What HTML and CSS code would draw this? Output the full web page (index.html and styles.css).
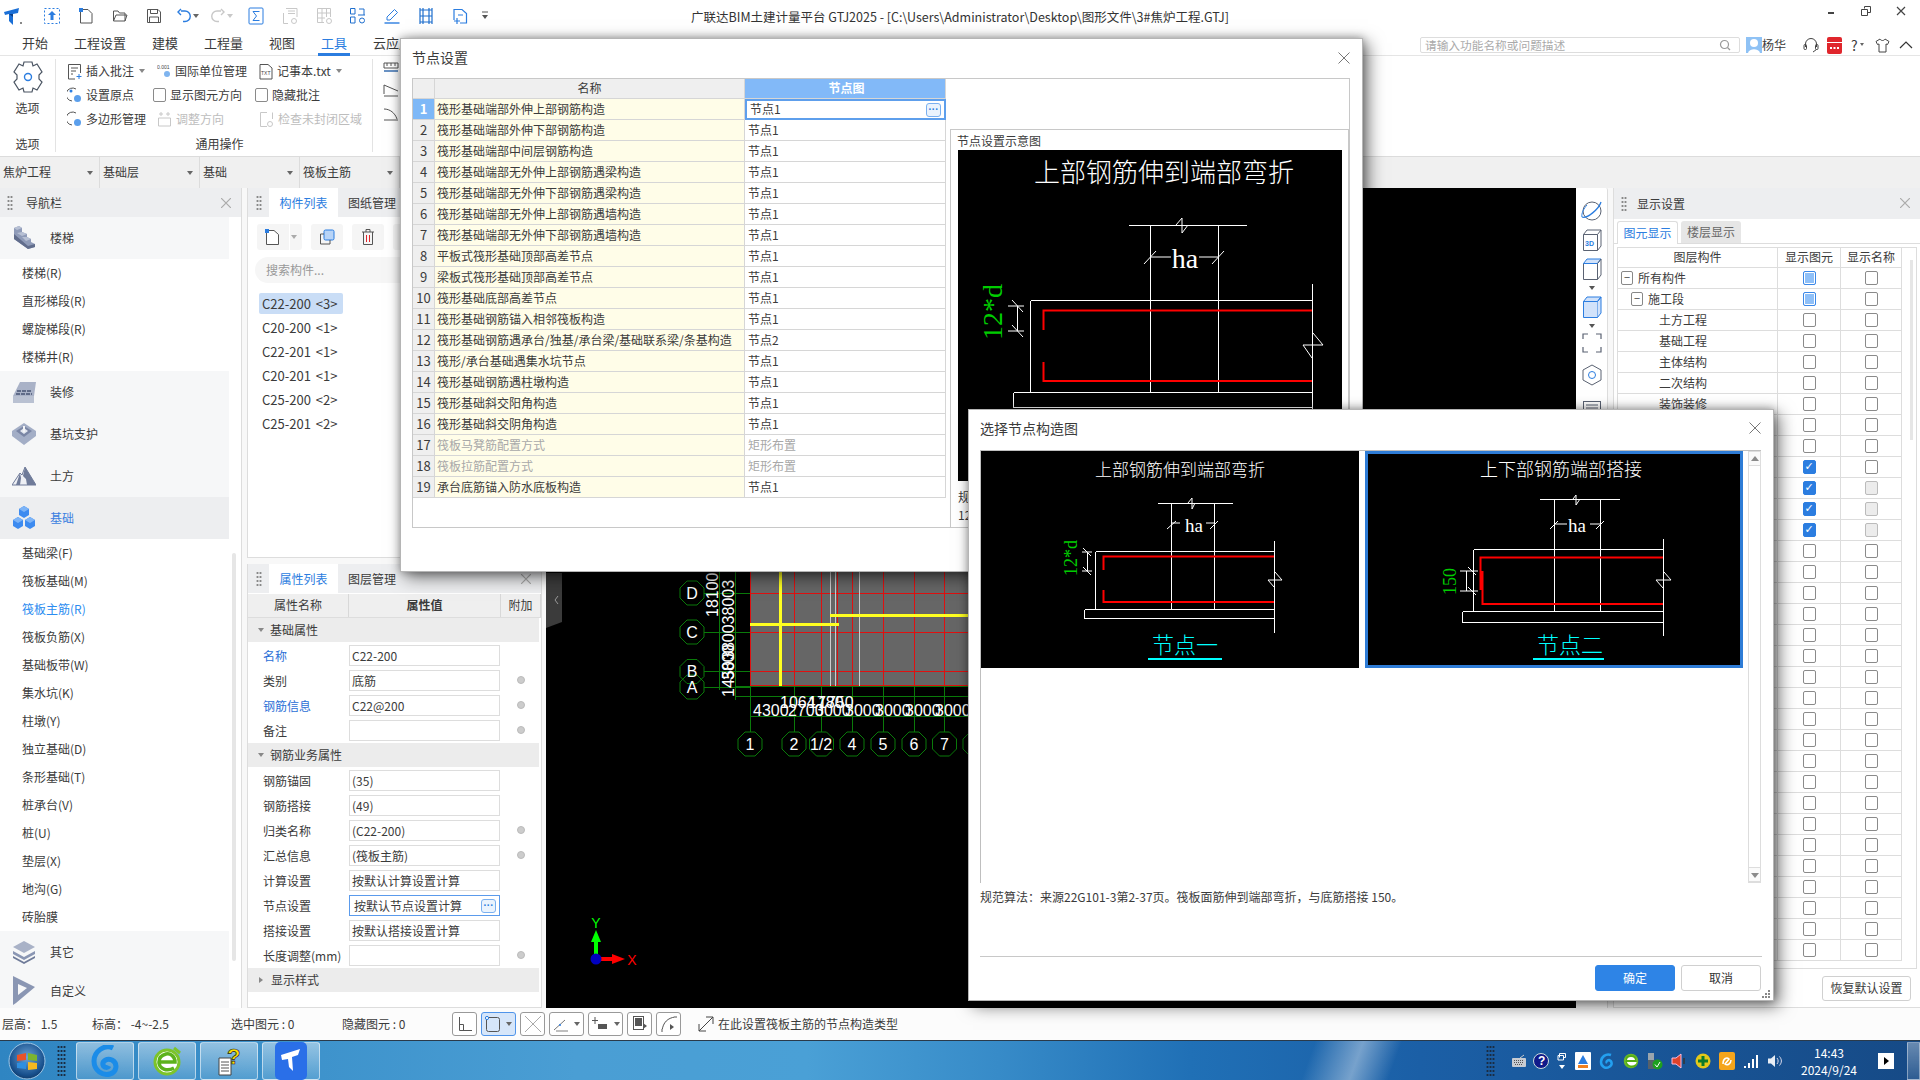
FILE: index.html
```html
<!DOCTYPE html>
<html lang="zh-CN">
<head>
<meta charset="utf-8">
<title>广联达BIM土建计量平台 GTJ2025</title>
<link rel="stylesheet" href="styles.css">
</head>
<body>
<div class="app">
  <header class="titlebar">
    <div class="qa">
      <span class="qa-logo"><svg width="20" height="20" viewBox="0 0 20 20"><path d="M1 6 16 2 15 7 10 8 10 19 6 15 6 8 2 9Z" fill="#1a6fd6"/><path d="M6 8 10 8 10 11Z" fill="#0c3f86"/><rect x="17" y="16" width="2" height="2" fill="#888"/></svg></span>
      <span class="qa-cell"><svg width="18" height="18" viewBox="0 0 18 18"><rect x="1.500" y="1.500" width="15" height="15" fill="none" stroke="#2b7de0" stroke-dasharray="2 2"/><path d="M9 4 13 8H10.500V13H7.500V8H5Z" fill="#2b7de0"/></svg></span>
      <span class="qa-cell"><svg width="16" height="18" viewBox="0 0 16 18"><path d="M2.500 2.500H10L14 6.500V16H2.500Z" fill="#fff" stroke="#555"/><rect x="1" y="1" width="4" height="4" fill="#2b7de0"/></svg></span>
      <span class="qa-cell"><svg width="16" height="16" viewBox="0 0 16 16"><path d="M1.500 13V3H6L7.500 5H13V13Z" fill="none" stroke="#555"/><path d="M1.500 13 4 7H15L13 13" fill="none" stroke="#555"/></svg></span>
      <span class="qa-cell"><svg width="16" height="16" viewBox="0 0 16 16"><path d="M1.500 1.500H12L14.500 4V14.500H1.500Z" fill="none" stroke="#555"/><path d="M4.500 1.500V5.500H11.500V1.500M3.500 14.500V9H12.500V14.500" fill="none" stroke="#555"/></svg></span>
      <span class="qa-cell"><svg width="14" height="16" viewBox="0 0 14 16"><path d="M4 3H8A5 5 0 0 1 8 13.500H6M4 1 1 4 4 7" fill="none" stroke="#2b7de0" stroke-width="1.400"/></svg><i class="caret"></i></span>
      <span class="qa-cell"><svg width="14" height="16" viewBox="0 0 14 16"><path d="M10 3H6A5 5 0 0 0 6 13.500H8M10 1 13 4 10 7" fill="none" stroke="#c8c8c8" stroke-width="1.400"/></svg><i class="caret off"></i></span>
      <span class="qa-cell"><svg width="16" height="18" viewBox="0 0 16 18"><rect x="1" y="1" width="14" height="16" rx="1" fill="none" stroke="#2b7de0"/><path d="M11.500 4.500H5L8.500 9 5 13.500H11.500" fill="none" stroke="#2b7de0"/></svg></span>
      <span class="qa-cell"><svg width="18" height="18" viewBox="0 0 18 18"><path d="M5 1.500H16V10M2.500 6V16.500H7" fill="none" stroke="#c8c8c8"/><path d="M7 4H14M7 6.500H14" stroke="#c8c8c8"/><circle cx="13" cy="14" r="2.500" fill="none" stroke="#c8c8c8"/></svg></span>
      <span class="qa-cell"><svg width="18" height="18" viewBox="0 0 18 18"><path d="M2.500 1.500H15.500V10M2.500 1.500V15.500H9M2.500 6H15.500M2.500 11H10M7 1.500V15.500M11.500 1.500V10" fill="none" stroke="#c8c8c8"/><circle cx="14" cy="14" r="2.500" fill="none" stroke="#c8c8c8"/></svg></span>
      <span class="qa-cell"><svg width="18" height="18" viewBox="0 0 18 18"><path d="M1.500 1.500H6V7H1.500ZM1.500 10H6V16H1.500ZM10 2H15V8" fill="none" stroke="#1f6fce"/><circle cx="13" cy="13.500" r="2.500" fill="none" stroke="#1f6fce"/><path d="M9 8H16" stroke="#1f6fce"/></svg></span>
      <span class="qa-cell"><svg width="18" height="18" viewBox="0 0 18 18"><path d="M4 10 11.500 2.500 14.500 5.500 7 13H4Z" fill="none" stroke="#2b7de0"/><path d="M1.500 16H16.500" stroke="#2b7de0" stroke-width="1.400"/></svg></span>
      <span class="qa-cell"><svg width="16" height="18" viewBox="0 0 16 18"><path d="M2 1V17M14 1V17M5 1V17M11 1V17M2 3H14M2 9H14M2 15H14" fill="none" stroke="#1f6fce" stroke-width="1.200"/></svg></span>
      <span class="qa-cell"><svg width="16" height="18" viewBox="0 0 16 18"><path d="M2 13V2.500H10L14.500 6.500V16H8" fill="none" stroke="#2b7de0" stroke-width="1.200"/><path d="M5 11V17M2 14H8M6 8H11" stroke="#2b7de0" stroke-width="1.200"/></svg></span>
      <span class="qa-last"><svg width="8" height="10" viewBox="0 0 8 10"><path d="M1 1H7" stroke="#555"/><path d="M1 4H7L4 8Z" fill="#555"/></svg></span>
    </div>
    <div class="title-text">广联达BIM土建计量平台 GTJ2025 - [C:\Users\Administrator\Desktop\图形文件\3#焦炉工程.GTJ]</div>
    <div class="win-ctrl">
      <svg class="wc-min" width="8" height="3" viewBox="0 0 8 3"><rect width="6" height="2" fill="#444"/></svg>
      <svg width="10" height="10" viewBox="0 0 10 10"><path d="M3.500 2.500V.5H9.500V6.500H7M.5 3.500H6.500V9.500H.5Z" fill="none" stroke="#444"/></svg>
      <svg width="10" height="10" viewBox="0 0 10 10"><path d="M1 1 9 9M9 1 1 9" stroke="#444" stroke-width="1.200"/></svg>
    </div>
  </header>

  <nav class="menubar">
    <span class="m-first">开始</span><span>工程设置</span><span>建模</span><span>工程量</span><span>视图</span><span class="m-on"><b>工具</b></span><span>云应用</span>
    <div class="menu-right">
      <div class="help-search"><span>请输入功能名称或问题描述</span><svg width="12" height="12" viewBox="0 0 12 12"><circle cx="5.500" cy="5.500" r="4" fill="none" stroke="#999" stroke-width="1.200"/><path d="M8.500 8.500 11 11" stroke="#999" stroke-width="1.200"/></svg></div>
      <svg class="avatar" width="16" height="16" viewBox="0 0 16 16"><rect width="16" height="16" fill="#8fc2f5"/><circle cx="8" cy="6" r="4" fill="#fff"/><path d="M2 16C3 11 13 11 14 16Z" fill="#fff"/></svg>
      <span class="uname">杨华</span>
      <svg class="mr-ic" width="16" height="16" viewBox="0 0 16 16"><path d="M2.500 10V7A5.500 5.500 0 0 1 13.500 7V10" fill="none" stroke="#444"/><rect x="1" y="7.500" width="2.500" height="5" rx="1" fill="none" stroke="#444"/><rect x="12.500" y="7.500" width="2.500" height="5" rx="1" fill="none" stroke="#444"/><path d="M13.500 12.500 10 15" fill="none" stroke="#444"/></svg>
      <svg class="mr-ic2" width="15" height="17" viewBox="0 0 15 17"><rect width="15" height="17" rx="2" fill="#e0262c"/><rect x="0" y="5" width="15" height="1" fill="#fff"/><rect x="3" y="10" width="2" height="2" fill="#fff"/><rect x="6.500" y="10" width="2" height="2" fill="#fff"/><rect x="10" y="10" width="2" height="2" fill="#fff"/></svg>
      <span class="qm">?<i class="caret tiny"></i></span>
      <svg class="mr-ic3" width="15" height="15" viewBox="0 0 15 15"><path d="M5 1 1 3.500 2.500 6.500 4 6V14H11V6L12.500 6.500 14 3.500 10 1C9 3 6 3 5 1Z" fill="none" stroke="#444"/></svg>
      <svg class="mr-ic4" width="14" height="8" viewBox="0 0 14 8"><path d="M1 7 7 1 13 7" fill="none" stroke="#333" stroke-width="1.200"/></svg>
    </div>
  </nav>

  <section class="ribbon">
    <div class="rg rg-opt">
      <div class="opt-main">
        <svg width="30" height="34" viewBox="0 0 30 34"><path d="M11 2H19L20 6 24 4 29 12 26 15V19L29 22 24 30 20 28 19 32H11L10 28 6 30 1 22 4 19V15L1 12 6 4 10 6Z" fill="none" stroke="#4b5563" stroke-width="1.200"/><circle cx="15" cy="17" r="3.500" fill="none" stroke="#2b7de0" stroke-width="1.400"/></svg>
        <span>选项</span>
      </div>
      <div class="rg-label">选项</div>
    </div>
    <div class="rg rg-gen">
      <div class="rg-grid">
        <div class="ri"><svg width="15" height="17" viewBox="0 0 15 17"><path d="M8 16H1.500V1.500H13.500V10M4 5H11M4 8H9M4 11H6" fill="none" stroke="#555"/><path d="M12 11V16M9.500 13.500H14.500" stroke="#2b7de0"/></svg><span class="it">插入批注</span><i class="caret"></i></div>
        <div class="ri"><svg width="14" height="17" viewBox="0 0 14 17"><text x="0" y="6" class="tiny-t">0.001</text><circle cx="10" cy="11" r="3" fill="#7fb4ef"/></svg><span>国际单位管理</span></div>
        <div class="ri"><svg width="14" height="17" viewBox="0 0 14 17"><path d="M1 1.500H9L13 5V16H1Z" fill="none" stroke="#555"/><text x="2" y="12" class="tiny-t">TXT</text></svg><span>记事本.txt</span><i class="caret"></i></div>
        <div class="ri"><svg width="15" height="17" viewBox="0 0 15 17"><path d="M9 2A6.500 6.500 0 1 0 5 14" fill="none" stroke="#555"/><circle cx="4" cy="4" r="1.500" fill="#2b7de0"/><circle cx="10.500" cy="11.500" r="3.500" fill="#5b9fec"/></svg><span>设置原点</span></div>
        <label class="ri"><i class="rb-check"></i><span>显示图元方向</span></label>
        <label class="ri"><i class="rb-check"></i><span>隐藏批注</span></label>
        <div class="ri"><svg width="15" height="17" viewBox="0 0 15 17"><path d="M9 2A6.500 6.500 0 1 0 5 14" fill="none" stroke="#555"/><circle cx="10.500" cy="11.500" r="3.500" fill="#5b9fec"/></svg><span>多边形管理</span></div>
        <div class="ri off"><svg width="15" height="17" viewBox="0 0 15 17"><path d="M1.500 7H13.500V15H1.500ZM4 1V5M11 1V5M2 3H6M9 3H13" fill="none" stroke="#c8c8c8"/></svg><span>调整方向</span></div>
        <div class="ri off"><svg width="15" height="17" viewBox="0 0 15 17"><path d="M8 15.500H1.500V1.500H8M13.500 1.500V8" fill="none" stroke="#c8c8c8"/><circle cx="11" cy="13" r="2.500" fill="none" stroke="#c8c8c8"/></svg><span>检查未封闭区域</span></div>
      </div>
      <div class="rg-label">通用操作</div>
    </div>
    <div class="rg rg-third">
      <svg width="16" height="15" viewBox="0 0 16 15"><path d="M1 3H15V8H1ZM1 11H15M4 3V6M8 3V6M12 3V6" fill="none" stroke="#555"/><path d="M1 11H15" stroke="#2b7de0"/></svg>
      <svg width="16" height="15" viewBox="0 0 16 15"><path d="M1 10V1L15 7M1 12H15" fill="none" stroke="#555"/></svg>
      <svg width="16" height="15" viewBox="0 0 16 15"><path d="M1 1C7 1 12 5 14 11M1 12H15" fill="none" stroke="#555"/></svg>
    </div>
  </section>

  <div class="selbar">
    <div class="sel">焦炉工程<i class="caret"></i></div>
    <div class="sel">基础层<i class="caret"></i></div>
    <div class="sel">基础<i class="caret"></i></div>
    <div class="sel">筏板主筋<i class="caret"></i></div>
  </div>

  <main class="work">
    <aside class="nav">
      <div class="ph"><i class="grip"></i><span class="ph-t">导航栏</span><svg class="ph-x" width="10" height="10" viewBox="0 0 10 10"><path d="M0 0 10 10M10 0 0 10" stroke="#aaa" stroke-width="1.200"/></svg></div>
      <div class="sec"><svg width="24" height="24" viewBox="0 0 24 24"><path d="M2 2 7 0 10 2V6L15 8V11L19 13V16L23 18V21L16 23 2 13Z" fill="#8f9bb8"/><path d="M2 2 7 0 10 2 5 4ZM5 7 10 6 15 8 10 10ZM10 11 15 11 19 13 14 15Z" fill="#b7c0d4"/><path d="M2 13 16 23 23 21V18L16 20 2 8Z" fill="#616d8c"/></svg><span>楼梯</span></div>
      <div class="sub">楼梯(R)</div><div class="sub">直形梯段(R)</div><div class="sub">螺旋梯段(R)</div><div class="sub">楼梯井(R)</div>
      <div class="sec"><svg width="24" height="24" viewBox="0 0 24 24"><path d="M8 2H24L22 16H1Z" fill="#a9b2c7"/><path d="M1 16H22V23H1Z" fill="#b9c1d2"/><path d="M5 11H20M4 14H20" stroke="#5f6b88" stroke-width="2" stroke-dasharray="4 1"/></svg><span>装修</span></div>
      <div class="sec"><svg width="24" height="24" viewBox="0 0 24 24"><path d="M12 1 24 9V14L12 23 0 14V9Z" fill="#a3aec6"/><path d="M12 4 20 9 12 15 4 9Z" fill="#7a86a5"/><path d="M12 6 16 9 12 12 8 9Z" fill="#e4e8f0"/><path d="M11 4H13V10H11Z" fill="#f4f5f8"/></svg><span>基坑支护</span></div>
      <div class="sec"><svg width="24" height="24" viewBox="0 0 24 24"><path d="M0 21 8 9 10 11 13 3 24 21Z" fill="#eef0f5" stroke="#6f7b99"/><path d="M13 3 24 21H15L14 15 11 12Z" fill="#6f7b99"/><path d="M8 9 4 21H8L9 14Z" fill="#6f7b99"/></svg><span>土方</span></div>
      <div class="sec sec-on"><svg width="24" height="24" viewBox="0 0 24 24"><path d="M12 0 17 3V9L12 12 7 9V3Z" fill="#3d8bf0"/><path d="M6 11 11 14V20L6 23 1 20V14Z" fill="#3d8bf0"/><path d="M18 11 23 14V20L18 23 13 20V14Z" fill="#3d8bf0"/><path d="M7 3 12 6 17 3 12 0ZM1 14 6 17 11 14 6 11ZM13 14 18 17 23 14 18 11Z" fill="#7db4f7"/></svg><span>基础</span></div>
      <div class="sub">基础梁(F)</div><div class="sub">筏板基础(M)</div><div class="sub sub-on">筏板主筋(R)</div><div class="sub">筏板负筋(X)</div><div class="sub">基础板带(W)</div><div class="sub">集水坑(K)</div><div class="sub">柱墩(Y)</div><div class="sub">独立基础(D)</div><div class="sub">条形基础(T)</div><div class="sub">桩承台(V)</div><div class="sub">桩(U)</div><div class="sub">垫层(X)</div><div class="sub">地沟(G)</div><div class="sub">砖胎膜</div>
      <div class="sec"><svg width="24" height="24" viewBox="0 0 24 24"><path d="M12 1 23 7 12 13 1 7Z" fill="#a9b2c7"/><path d="M1 11 12 17 23 11V14L12 20 1 14Z" fill="#8a96b3"/><path d="M1 16 12 22 23 16V18L12 24 1 18Z" fill="#6f7b99"/></svg><span>其它</span></div>
      <div class="sec sec-last"><svg width="24" height="30" viewBox="0 0 24 30"><path d="M1 1 23 12 4 28 1 30Z" fill="#8a96b3"/><path d="M6 9 15 13 6 20Z" fill="#f6f7f8"/></svg><span>自定义</span></div>
      <i class="nav-scroll"></i>
    </aside>

    <div class="mid">
      <section class="list-panel">
        <div class="ph ph-tabs"><i class="grip g2"></i><span class="tab-on">构件列表</span><span class="tab-off">图纸管理</span></div>
        <div class="lp-tools">
          <span class="lbtn lb-new"><svg width="16" height="18" viewBox="0 0 16 18"><path d="M2.500 2.500H10L14.500 6.500V16.500H2.500Z" fill="#fff" stroke="#555"/><rect x="1" y="1" width="4" height="4" fill="#2b7de0"/></svg><i class="caret lb-caret"></i></span>
          <span class="lbtn"><svg width="16" height="16" viewBox="0 0 16 16"><rect x="5" y="1" width="10" height="10" rx="1.500" fill="#b8d4f7" stroke="#2b7de0"/><path d="M5 5H1.500V15H11V11" fill="none" stroke="#555"/></svg></span>
          <span class="lbtn"><svg width="14" height="18" viewBox="0 0 14 18"><path d="M1 4H13M5 4V1.500H9V4M2.500 4V16.500H11.500V4" fill="none" stroke="#555"/><path d="M5.500 7V14M8.500 7V14" stroke="#e0262c"/></svg></span>
          <span class="lbtn"></span>
        </div>
        <div class="lp-search">搜索构件...</div>
        <ul class="lp-list">
          <li class="lp-on">C22-200 &lt;3&gt;</li><li>C20-200 &lt;1&gt;</li><li>C22-201 &lt;1&gt;</li><li>C20-201 &lt;1&gt;</li><li>C25-200 &lt;2&gt;</li><li>C25-201 &lt;2&gt;</li>
        </ul>
      </section>
      <section class="prop-panel">
        <div class="ph ph-tabs"><i class="grip g2"></i><span class="tab-on">属性列表</span><span class="tab-off">图层管理</span><svg class="ph-x" width="10" height="10" viewBox="0 0 10 10"><path d="M0 0 10 10M10 0 0 10" stroke="#aaa" stroke-width="1.200"/></svg></div>
        <div class="pt-head"><span>属性名称</span><b>属性值</b><span>附加</span></div>
        <div class="pt-sec"><i class="tri-d"></i>基础属性</div>
        <div class="pr"><span class="lk">名称</span><span class="pv">C22-200</span><i></i></div>
        <div class="pr"><span>类别</span><span class="pv">底筋</span><i class="dot"></i></div>
        <div class="pr"><span class="lk">钢筋信息</span><span class="pv">C22@200</span><i class="dot"></i></div>
        <div class="pr"><span>备注</span><span class="pv"></span><i class="dot"></i></div>
        <div class="pt-sec pt-gap"><i class="tri-d"></i>钢筋业务属性</div>
        <div class="pr"><span>钢筋锚固</span><span class="pv">(35)</span><i></i></div>
        <div class="pr"><span>钢筋搭接</span><span class="pv">(49)</span><i></i></div>
        <div class="pr"><span>归类名称</span><span class="pv">(C22-200)</span><i class="dot"></i></div>
        <div class="pr"><span>汇总信息</span><span class="pv">(筏板主筋)</span><i class="dot"></i></div>
        <div class="pr"><span>计算设置</span><span class="pv">按默认计算设置计算</span><i></i></div>
        <div class="pr"><span>节点设置</span><span class="pv pv-on">按默认节点设置计算<em class="more">···</em></span><i></i></div>
        <div class="pr"><span>搭接设置</span><span class="pv">按默认搭接设置计算</span><i></i></div>
        <div class="pr"><span>长度调整(mm)</span><span class="pv"></span><i class="dot"></i></div>
        <div class="pt-sec pt-gap"><i class="tri-r"></i>显示样式</div>
      </section>
    </div>

    <div class="canvas">
      <svg class="cad" width="1030" height="820" viewBox="546 188 1030 820">
        <path d="M546 573H562V622L546 628Z" fill="#3b3b3b"/><path d="M558 596 555 600 558 604" fill="none" stroke="#999"/>
        <rect x="750" y="560" width="240" height="126" fill="#666"/>
        <g stroke="#e01010" shape-rendering="crispEdges">
          <path d="M750 560V686M794 560V686M821.500 560V686M837.500 560V686M852 560V686M883 560V686M914 560V686M944.500 560V686M750 593.500H990M750 632.500H990M750 671.500H990"/>
          <path d="M750 686H990" stroke-width="2"/>
        </g>
        <path d="M830.500 560V686M835.500 560V686M859.500 560V686" stroke="#ccc" shape-rendering="crispEdges"/>
        <g fill="#ffff20" shape-rendering="crispEdges"><rect x="779" y="560" width="3" height="126"/><rect x="750" y="622.500" width="89" height="3"/><rect x="830" y="613.500" width="140" height="3"/></g>
        <g stroke="#0a7a0a" fill="none" shape-rendering="crispEdges">
          <path d="M704 593.500H750M704 632.500H750M704 671.500H750M704 687.500H750M719.500 570V690M735.500 570V700"/>
          <path d="M750 686V732M794 686V732M821.500 686V732M852 686V732M883 686V732M914 686V732M944.500 686V732M735 686H990M735 696.500H990M750 716.500H990"/>
        </g>
        <g fill="none" stroke="#0a7a0a">
          <path d="M687 581H697L704 588V598L697 605H687L680 598V588Z"/>
          <path d="M687 620H697L704 627V637L697 644H687L680 637V627Z"/>
          <path d="M687 659.500H697L704 666.500V676.500L697 683.500H687L680 676.500V666.500Z"/>
          <path d="M687 675H697L704 682V692L697 699H687L680 692V682Z"/>
          <path d="M745 732H755L762 739V749L755 756H745L738 749V739Z"/>
          <path d="M789 732H799L806 739V749L799 756H789L782 749V739Z"/>
          <path d="M816.500 732H826.500L833.500 739V749L826.500 756H816.500L809.500 749V739Z"/>
          <path d="M847 732H857L864 739V749L857 756H847L840 749V739Z"/>
          <path d="M878 732H888L895 739V749L888 756H878L871 749V739Z"/>
          <path d="M909 732H919L926 739V749L919 756H909L902 749V739Z"/>
          <path d="M939.500 732H949.500L956.500 739V749L949.500 756H939.500L932.500 749V739Z"/>
          <path d="M970 732H980L987 739V749L980 756H970L963 749V739Z"/>
        </g>
        <g class="cad-t">
          <text x="692" y="599" text-anchor="middle">D</text><text x="692" y="638" text-anchor="middle">C</text><text x="692" y="677" text-anchor="middle">B</text><text x="692" y="693" text-anchor="middle">A</text>
          <text x="750" y="750" text-anchor="middle">1</text><text x="794" y="750" text-anchor="middle">2</text><text x="821" y="750" text-anchor="middle">1/2</text><text x="852" y="750" text-anchor="middle">4</text><text x="883" y="750" text-anchor="middle">5</text><text x="914" y="750" text-anchor="middle">6</text><text x="944.500" y="750" text-anchor="middle">7</text>
          <text transform="translate(718 617) rotate(-90)">18100</text>
          <text transform="translate(734 660) rotate(-90)">380038003</text>
          <text transform="translate(734 697) rotate(-90)">1450</text>
          <text transform="translate(734 680) rotate(-90)">3800</text>
          <text x="780" y="708">1064</text><text x="808" y="708">1780</text><text x="818" y="708">1750</text>
          <text x="753" y="716">4300</text><text x="788" y="716">2700</text><text x="815" y="716">3000</text><text x="845" y="716">3000</text><text x="875" y="716">3000</text><text x="905" y="716">3000</text><text x="935" y="716">3000</text>
        </g>
        <path d="M596 955V938" stroke="#0f0" stroke-width="4"/><path d="M596 930 601 942H591Z" fill="#0f0"/>
        <path d="M600 959H614" stroke="#f00" stroke-width="4"/><path d="M625 959 612 954V964Z" fill="#f00"/>
        <circle cx="596" cy="959" r="5.500" fill="#0000c0"/>
        <text x="596" y="928" class="ax-y" text-anchor="middle">Y</text><text x="632" y="965" class="ax-x" text-anchor="middle">X</text>
      </svg>
    </div>

    <div class="vtools">
      <svg width="22" height="24" viewBox="0 0 22 24"><circle cx="11" cy="12" r="9" fill="none" stroke="#5a6272"/><path d="M1 18C6 20 18 10 20 3" fill="none" stroke="#2b7de0" stroke-width="1.300"/><path d="M1 18C0 15 3 9 6 6" fill="none" stroke="#2b7de0"/></svg>
      <svg width="20" height="24" viewBox="0 0 20 24"><path d="M1.500 6.500H15.500V22.500H1.500ZM1.500 6.500 5 2H19V18L15.500 22.500M15.500 6.500 19 2" fill="none" stroke="#5a6272"/><text x="3" y="18" class="t3d">3D</text></svg>
      <svg width="20" height="24" viewBox="0 0 20 24"><path d="M1.500 6.500H15.500V22.500H1.500Z" fill="#fff" stroke="#5a6272"/><path d="M1.500 6.500 5 2H19L15.500 6.500Z" fill="#d1e2fa" stroke="#2b7de0"/><path d="M15.500 6.500 19 2V18L15.500 22.500" fill="none" stroke="#5a6272"/></svg>
      <i class="vt-tri"></i>
      <svg width="20" height="24" viewBox="0 0 20 24"><path d="M1.500 6.500H15.500V22.500H1.500Z" fill="#d1e2fa" stroke="#2b7de0"/><path d="M1.500 6.500 5 2H19L15.500 6.500ZM15.500 6.500 19 2V18L15.500 22.500" fill="#d1e2fa" stroke="#2b7de0"/></svg>
      <i class="vt-tri"></i>
      <svg width="20" height="20" viewBox="0 0 20 20"><path d="M1 6V1H6M14 1H19V6M1 14V19H6M14 19H19V14" fill="none" stroke="#5a6272" stroke-width="1.200"/></svg>
      <svg class="vt-g" width="20" height="22" viewBox="0 0 20 22"><path d="M10 1 19 6V16L10 21 1 16V6Z" fill="none" stroke="#5a6272"/><circle cx="10" cy="11" r="3.500" fill="none" stroke="#2b7de0"/></svg>
      <svg class="vt-l" width="20" height="16" viewBox="0 0 20 16"><rect x="1.500" y="1.500" width="17" height="13" fill="none" stroke="#5a6272"/><path d="M4 5H16M4 8H16" stroke="#5a6272"/></svg>
    </div>

    <aside class="disp">
      <div class="ph"><i class="grip g3"></i><span class="ph-t2">显示设置</span><svg class="ph-x" width="10" height="10" viewBox="0 0 10 10"><path d="M0 0 10 10M10 0 0 10" stroke="#aaa" stroke-width="1.200"/></svg></div>
      <div class="d-tabs"><span class="dt-on">图元显示</span><span class="dt-off">楼层显示</span></div>
      <div class="d-table">
        <div class="dr dr-h"><span>图层构件</span><span>显示图元</span><span>显示名称</span></div>
        <div class="dr"><span class="n0"><i class="tbox">−</i>所有构件</span><span><i class="cb cb-f"></i></span><span><i class="cb"></i></span></div>
        <div class="dr"><span class="n1"><i class="tbox">−</i>施工段</span><span><i class="cb cb-f"></i></span><span><i class="cb"></i></span></div>
        <div class="dr"><span class="n2">土方工程</span><span><i class="cb"></i></span><span><i class="cb"></i></span></div>
        <div class="dr"><span class="n2">基础工程</span><span><i class="cb"></i></span><span><i class="cb"></i></span></div>
        <div class="dr"><span class="n2">主体结构</span><span><i class="cb"></i></span><span><i class="cb"></i></span></div>
        <div class="dr"><span class="n2">二次结构</span><span><i class="cb"></i></span><span><i class="cb"></i></span></div>
        <div class="dr"><span class="n2">装饰装修</span><span><i class="cb"></i></span><span><i class="cb"></i></span></div>
        <div class="dr"><span></span><span><i class="cb"></i></span><span><i class="cb"></i></span></div>
        <div class="dr"><span></span><span><i class="cb"></i></span><span><i class="cb"></i></span></div>
        <div class="dr"><span></span><span><i class="cb cb-c">✓</i></span><span><i class="cb"></i></span></div>
        <div class="dr"><span></span><span><i class="cb cb-c">✓</i></span><span><i class="cb cb-g"></i></span></div>
        <div class="dr"><span></span><span><i class="cb cb-c">✓</i></span><span><i class="cb cb-g"></i></span></div>
        <div class="dr"><span></span><span><i class="cb cb-c">✓</i></span><span><i class="cb cb-g"></i></span></div>
        <div class="dr"><span></span><span><i class="cb"></i></span><span><i class="cb"></i></span></div>
        <div class="dr"><span></span><span><i class="cb"></i></span><span><i class="cb"></i></span></div>
        <div class="dr"><span></span><span><i class="cb"></i></span><span><i class="cb"></i></span></div>
        <div class="dr"><span></span><span><i class="cb"></i></span><span><i class="cb"></i></span></div>
        <div class="dr"><span></span><span><i class="cb"></i></span><span><i class="cb"></i></span></div>
        <div class="dr"><span></span><span><i class="cb"></i></span><span><i class="cb"></i></span></div>
        <div class="dr"><span></span><span><i class="cb"></i></span><span><i class="cb"></i></span></div>
        <div class="dr"><span></span><span><i class="cb"></i></span><span><i class="cb"></i></span></div>
        <div class="dr"><span></span><span><i class="cb"></i></span><span><i class="cb"></i></span></div>
        <div class="dr"><span></span><span><i class="cb"></i></span><span><i class="cb"></i></span></div>
        <div class="dr"><span></span><span><i class="cb"></i></span><span><i class="cb"></i></span></div>
        <div class="dr"><span></span><span><i class="cb"></i></span><span><i class="cb"></i></span></div>
        <div class="dr"><span></span><span><i class="cb"></i></span><span><i class="cb"></i></span></div>
        <div class="dr"><span></span><span><i class="cb"></i></span><span><i class="cb"></i></span></div>
        <div class="dr"><span></span><span><i class="cb"></i></span><span><i class="cb"></i></span></div>
        <div class="dr"><span></span><span><i class="cb"></i></span><span><i class="cb"></i></span></div>
        <div class="dr"><span></span><span><i class="cb"></i></span><span><i class="cb"></i></span></div>
        <div class="dr"><span></span><span><i class="cb"></i></span><span><i class="cb"></i></span></div>
        <div class="dr"><span></span><span><i class="cb"></i></span><span><i class="cb"></i></span></div>
        <div class="dr"><span></span><span><i class="cb"></i></span><span><i class="cb"></i></span></div>
        <i class="d-scroll"></i>
      </div>
      <div class="d-foot"><button class="d-reset">恢复默认设置</button></div>
    </aside>
  </main>

  <footer class="status">
    <span class="st1">层高： 1.5</span><span class="st2">标高： -4~-2.5</span><span class="st3">选中图元 : 0</span><span class="st4">隐藏图元 : 0</span>
    <span class="sb sb-s"><svg width="16" height="16" viewBox="0 0 16 16"><path d="M2.500 1V14.500H15M2.500 8.500H6.500V14.500" fill="none" stroke="#555"/></svg></span>
    <span class="sb sb-l sb-on"><svg width="16" height="18" viewBox="0 0 16 18"><rect x="1.500" y="2.500" width="13" height="14" rx="2" fill="none" stroke="#555"/><circle cx="2" cy="3" r="1.600" fill="#fff" stroke="#2b7de0"/></svg><i class="caret"></i></span>
    <span class="sb sb-s"><svg width="18" height="18" viewBox="0 0 18 18"><path d="M1 1 17 17M17 1 1 17" stroke="#aaa"/></svg></span>
    <span class="sb sb-l"><svg width="16" height="16" viewBox="0 0 16 16"><path d="M1 14 12 4" stroke="#777"/><path d="M3 15H15" stroke="#aaa" stroke-width="1.500"/><circle cx="7" cy="9" r="1" fill="#2b7de0"/></svg><i class="caret"></i></span>
    <span class="sb sb-l"><svg width="18" height="16" viewBox="0 0 18 16"><path d="M4 1V8M1 4.500H7" stroke="#555"/><rect x="7" y="8" width="9" height="5" fill="#555"/></svg><i class="caret"></i></span>
    <span class="sb sb-s"><svg width="16" height="18" viewBox="0 0 16 18"><rect x="1.500" y="1.500" width="10" height="13" fill="none" stroke="#555"/><rect x="3" y="3" width="7" height="8" fill="#555"/><path d="M11 8 15 11 11 14Z" fill="#555"/></svg></span>
    <span class="sb sb-s"><svg width="18" height="18" viewBox="0 0 18 18"><path d="M2 16C3 7 8 3 15 2" fill="none" stroke="#555"/><path d="M10 9 14 12 10 15Z" fill="#555"/><rect x="1" y="14" width="2" height="3" fill="#aaa"/><rect x="14" y="1" width="3" height="2" fill="#aaa"/></svg></span>
    <svg class="st-arrow" width="16" height="16" viewBox="0 0 16 16"><path d="M1 15 15 1M8 1H15V8M1 8V15H8" fill="none" stroke="#444"/></svg>
    <span>在此设置筏板主筋的节点构造类型</span>
  </footer>

  <div class="taskbar">
    <svg class="orb" width="38" height="38" viewBox="0 0 38 38"><defs><radialGradient id="g1" cx=".5" cy=".4" r=".7"><stop offset="0" stop-color="#6ca4d8"/><stop offset=".7" stop-color="#174f8c"/><stop offset="1" stop-color="#0b2a4e"/></radialGradient></defs><circle cx="19" cy="19" r="18" fill="url(#g1)" stroke="#9fc7e6"/><path d="M9 13 18 11V18L9 19Z" fill="#e8532a"/><path d="M20 11 29 13V19L20 18Z" fill="#7cb52f"/><path d="M9 21 18 20V27L9 26Z" fill="#2f8fe0"/><path d="M20 20 29 21V27L20 28Z" fill="#f5b921"/></svg>
    <i class="tb-grip"></i>
    <span class="tb-btn"><svg width="28" height="32" viewBox="0 0 28 32"><path d="M22 3C14 -1 3 6 3 16 3 26 12 31 19 29 26 27 27 18 21 15 16 13 11 16 12 20 13 23 17 23 18 21" fill="none" stroke="#1b8ce8" stroke-width="5"/></svg></span>
    <span class="tb-btn"><svg width="30" height="32" viewBox="0 0 30 32"><circle cx="15" cy="17" r="12" fill="#fff" stroke="#7cc42a" stroke-width="3"/><path d="M7 17H23C23 11 18 8 14 9 10 10 7 13 7 17ZM7 17C7 24 15 27 22 23" fill="none" stroke="#5cb21c" stroke-width="3.500"/><path d="M22 3 28 8" stroke="#7cc42a" stroke-width="3"/></svg></span>
    <span class="tb-btn"><svg width="26" height="32" viewBox="0 0 26 32"><path d="M3 13H15V30H3Z" fill="#fff" stroke="#444"/><path d="M5 17H13M5 20H13M5 23H13M5 26H13" stroke="#555"/><text x="11" y="19" class="t-q">?</text></svg></span>
    <span class="tb-btn"><svg width="32" height="38" viewBox="0 0 32 38"><rect width="32" height="38" rx="5" fill="#2a6fe8"/><path d="M6 13 25 7 23 13 17 15 18 29 14 25 13 17 7 18Z" fill="#fff"/></svg></span>
    <div class="tray">
      <i class="tb-grip tr-grip"></i>
      <svg class="tr-kb" width="16" height="16" viewBox="0 0 16 16"><rect x="1" y="5" width="14" height="9" rx="1" fill="#c8ccd2"/><path d="M3 7.500H13M3 9.500H13M4 11.500H12" stroke="#555" stroke-dasharray="1 1"/><path d="M9 5 13 2" stroke="#ccc"/></svg>
      <svg width="16" height="16" viewBox="0 0 16 16"><circle cx="8" cy="8" r="7.500" fill="#101a8a" stroke="#cdd"/><text x="5" y="12" class="t-h">?</text></svg>
      <svg class="tr-up" width="10" height="18" viewBox="0 0 10 18"><path d="M2.500 5.500V1.500H8.500V5.500H6.500M1 3.500H6.500V8H1Z" fill="none" stroke="#fff"/><path d="M2 13H8L5 17Z" fill="#fff"/></svg>
      <svg width="16" height="18" viewBox="0 0 16 18"><rect width="16" height="18" rx="1" fill="#fff"/><path d="M8 3 13 12H3Z" fill="#2b7de0"/><rect x="3" y="13" width="10" height="3" fill="#f08020"/></svg>
      <svg width="16" height="18" viewBox="0 0 16 18"><path d="M12 3C7 1 2 5 2 10 2 15 7 17 10 15 14 13 13 9 10 8 8 8 7 10 8 11" fill="none" stroke="#23a0f0" stroke-width="2.500"/></svg>
      <svg width="16" height="18" viewBox="0 0 16 18"><circle cx="8" cy="9" r="6.500" fill="#fff" stroke="#6dbb22" stroke-width="1.500"/><path d="M3 9H13C13 5 10 4 8 4 5 4 3 6 3 9ZM3 9C3 14 9 16 13 13" fill="none" stroke="#54ad16" stroke-width="1.800"/></svg>
      <svg width="16" height="18" viewBox="0 0 16 18"><rect x="1" y="1" width="6" height="9" fill="#9aa5ad"/><rect x="1" y="8" width="8" height="9" fill="#56616b"/><circle cx="10.500" cy="12.500" r="5" fill="#1ea01e"/><path d="M8 12.500 10 15 13 10" fill="none" stroke="#fff"/></svg>
      <svg width="16" height="18" viewBox="0 0 16 18"><path d="M1 6H5L10 2V16L5 12H1Z" fill="#e0432a" stroke="#fbd"/><path d="M13 6V12" stroke="#333" stroke-width="1.500"/></svg>
      <svg width="16" height="18" viewBox="0 0 16 18"><circle cx="8" cy="9" r="7.500" fill="#e4c81a"/><path d="M8 4V14M3 9H13" stroke="#0d7a2a" stroke-width="3"/></svg>
      <svg width="16" height="18" viewBox="0 0 16 18"><rect width="16" height="18" rx="2" fill="#f5a51c"/><path d="M4 12C4 6 8 5 10 7L6 12C8 14 12 12 12 8" fill="none" stroke="#fff" stroke-width="1.500"/></svg>
      <svg width="16" height="16" viewBox="0 0 16 16"><path d="M1 13H3V15H1ZM5 10H7V15H5ZM9 6H11V15H9ZM13 2H15V15H13Z" fill="#fff"/></svg>
      <svg width="16" height="16" viewBox="0 0 16 16"><path d="M1 5.500H4L8 2V14L4 10.500H1Z" fill="#e8eef5"/><path d="M10 5C11.500 7 11.500 9 10 11M12.500 3.500C15 6.500 15 9.500 12.500 12.500" fill="none" stroke="#dde" /></svg>
      <div class="clock"><span>14:43</span><span>2024/9/24</span></div>
      <span class="flag-box"><i></i></span>
      <i class="show-desk"></i>
    </div>
  </div>
</div>

<!-- 节点设置 dialog -->
<section class="dlg dlg1">
  <div class="dlg-h"><span>节点设置</span><svg width="12" height="12" viewBox="0 0 12 12"><path d="M.5 .5 11.500 11.500M11.500 .5 .5 11.500" stroke="#777"/></svg></div>
  <div class="d1-body">
    <div class="nt">
      <div class="nt-r nt-hd"><span></span><span>名称</span><span class="nt-hnode">节点图</span></div>
      <div class="nt-r nt-cur"><span class="nt-n">1</span><span>筏形基础端部外伸上部钢筋构造</span><span>节点1<em class="more">···</em></span></div>
      <div class="nt-r"><span>2</span><span>筏形基础端部外伸下部钢筋构造</span><span>节点1</span></div>
      <div class="nt-r"><span>3</span><span>筏形基础端部中间层钢筋构造</span><span>节点1</span></div>
      <div class="nt-r"><span>4</span><span>筏形基础端部无外伸上部钢筋遇梁构造</span><span>节点1</span></div>
      <div class="nt-r"><span>5</span><span>筏形基础端部无外伸下部钢筋遇梁构造</span><span>节点1</span></div>
      <div class="nt-r"><span>6</span><span>筏形基础端部无外伸上部钢筋遇墙构造</span><span>节点1</span></div>
      <div class="nt-r"><span>7</span><span>筏形基础端部无外伸下部钢筋遇墙构造</span><span>节点1</span></div>
      <div class="nt-r"><span>8</span><span>平板式筏形基础顶部高差节点</span><span>节点1</span></div>
      <div class="nt-r"><span>9</span><span>梁板式筏形基础顶部高差节点</span><span>节点1</span></div>
      <div class="nt-r"><span>10</span><span>筏形基础底部高差节点</span><span>节点1</span></div>
      <div class="nt-r"><span>11</span><span>筏形基础钢筋锚入相邻筏板构造</span><span>节点1</span></div>
      <div class="nt-r"><span>12</span><span>筏形基础钢筋遇承台/独基/承台梁/基础联系梁/条基构造</span><span>节点2</span></div>
      <div class="nt-r"><span>13</span><span>筏形/承台基础遇集水坑节点</span><span>节点1</span></div>
      <div class="nt-r"><span>14</span><span>筏形基础钢筋遇柱墩构造</span><span>节点1</span></div>
      <div class="nt-r"><span>15</span><span>筏形基础斜交阳角构造</span><span>节点1</span></div>
      <div class="nt-r"><span>16</span><span>筏形基础斜交阴角构造</span><span>节点1</span></div>
      <div class="nt-r nt-dis"><span>17</span><span>筏板马凳筋配置方式</span><span>矩形布置</span></div>
      <div class="nt-r nt-dis"><span>18</span><span>筏板拉筋配置方式</span><span>矩形布置</span></div>
      <div class="nt-r"><span>19</span><span>承台底筋锚入防水底板构造</span><span>节点1</span></div>
    </div>
    <div class="prev">
      <div class="prev-box">
        <div class="prev-t">节点设置示意图</div>
        <svg class="prev-img" width="384" height="331" viewBox="958 150 384 331">
          <rect x="958" y="150" width="384" height="331" fill="#000"/>
          <text x="1164" y="182" text-anchor="middle" class="dg-title dg-big">上部钢筋伸到端部弯折</text>
          <g stroke="#fff" fill="none" shape-rendering="crispEdges">
            <path d="M1129 225.500H1247M1150.500 225.500V392M1218.500 225.500V392M1030.500 300.500H1312.500M1030.500 300.500V392M1013.500 392.500H1312.500M1013.500 392.500V407.500H1312.500M1312.500 284V481"/>
          </g>
          <g stroke="#fff" fill="none">
            <path d="M1176 225 1182 218V233L1188 225M1150 257H1171M1199 257H1218M1144 264 1156 251M1212 264 1224 251M1017.500 306V331M1008 306H1024M1008 331H1024M1012 300 1023 312M1012 325 1023 337M1303 345H1323L1313 333M1303 345 1312 358"/>
          </g>
          <path d="M1043.500 330V310.500H1312M1043.500 362V381H1312" fill="none" stroke="#f00" stroke-width="2"/>
          <text x="1185" y="268" text-anchor="middle" class="dg-ha dg-ha-big">ha</text>
          <text transform="translate(1002 340) rotate(-90)" class="dg-green dg-g-big">12*d</text>
        </svg>
        <p class="prev-note">规范算法：来源22G101-3第2-37页。筏板面筋伸到端部弯折，<br>12*d。</p>
      </div>
    </div>
  </div>
</section>

<!-- 选择节点构造图 dialog -->
<section class="dlg dlg2">
  <div class="dlg-h dlg-h2"><span>选择节点构造图</span><svg width="12" height="12" viewBox="0 0 12 12"><path d="M.5 .5 11.500 11.500M11.500 .5 .5 11.500" stroke="#777"/></svg></div>
  <div class="pick">
    <div class="pick-list">
      <svg class="thumb" width="378" height="217" viewBox="981 450 378 217">
        <rect x="981" y="450" width="378" height="217" fill="#000"/>
        <text x="1180" y="475" text-anchor="middle" class="dg-title dg-mid">上部钢筋伸到端部弯折</text>
        <g stroke="#fff" fill="none" shape-rendering="crispEdges"><path d="M1158 502.500H1233M1171.500 502.500V608M1214.500 502.500V608M1095.500 550.500H1274.500M1095.500 550.500V608M1084.500 608.500H1274.500M1084.500 608.500V617.500H1274.500M1274.500 540V632"/></g>
        <g stroke="#fff" fill="none"><path d="M1188 502 1192 497V508L1195 502M1171 522H1180M1206 522H1214M1167 528 1176 520M1210 528 1218 520M1087.500 551V570M1082 551H1092M1082 570H1092M1083 547 1091 555M1083 566 1091 574M1268 579H1282L1275 571M1268 579 1274 586"/></g>
        <path d="M1103.500 569V555.500H1274M1103.500 589V601H1274" fill="none" stroke="#f00" stroke-width="2"/>
        <text x="1194" y="531" text-anchor="middle" class="dg-ha dg-ha-mid">ha</text>
        <text transform="translate(1077 575) rotate(-90)" class="dg-green dg-g-mid">12*d</text>
        <text x="1185" y="652" text-anchor="middle" class="dg-cyan">节点一</text>
        <rect x="1148" y="657" width="74" height="2" fill="#0ff"/>
      </svg>
      <svg class="thumb thumb-on" width="378" height="217" viewBox="1365 450 378 217">
        <rect x="1365" y="450" width="378" height="217" fill="#000"/>
        <text x="1561" y="475" text-anchor="middle" class="dg-title dg-r">上下部钢筋端部搭接</text>
        <g stroke="#fff" fill="none" shape-rendering="crispEdges"><path d="M1540 498.500H1620M1554.500 498.500V610M1600.500 498.500V610M1473.500 548.500H1663.500M1473.500 548.500V610M1462.500 610.500H1663.500M1462.500 610.500V621.500H1663.500M1663.500 538V635"/></g>
        <g stroke="#fff" fill="none"><path d="M1573 498 1576 494V504L1580 498M1554 523H1567M1590 523H1600M1550 528 1558 520M1596 528 1604 520M1466.500 570V590M1460 570H1478M1460 590H1478M1468 566 1476 574M1468 586 1476 594M1656 579H1671L1664 571M1656 579 1663 587"/></g>
        <path d="M1480.500 589V556.500H1663M1482.500 570V603H1663" fill="none" stroke="#f00" stroke-width="2"/>
        <text x="1577" y="531" text-anchor="middle" class="dg-ha dg-ha-mid">ha</text>
        <text transform="translate(1456 594) rotate(-90)" class="dg-green dg-g-mid">150</text>
        <text x="1570" y="652" text-anchor="middle" class="dg-cyan">节点二</text>
        <rect x="1533" y="657" width="71" height="2" fill="#0ff"/>
      </svg>
    </div>
    <div class="vscroll"><i class="vs-up"></i><i class="vs-dn"></i></div>
  </div>
  <p class="rule">规范算法：来源22G101-3第2-37页。筏板面筋伸到端部弯折，与底筋搭接 150。</p>
  <div class="dlg-foot"><button class="btn btn-p">确定</button><button class="btn">取消</button></div>
  <svg class="resize" width="8" height="8" viewBox="0 0 8 8"><path d="M6 0H8V2H6ZM3 3H5V5H3ZM6 3H8V5H6ZM0 6H2V8H0ZM3 6H5V8H3ZM6 6H8V8H6Z" fill="#888"/></svg>
</section>
</body>
</html>
```
FILE: styles.css
```css
* { box-sizing: border-box; }
html, body { margin: 0; padding: 0; width: 1920px; height: 1080px; overflow: hidden; background: #fff; }
body { font: 12px/1.2 "Noto Sans CJK SC", "Noto Sans", sans-serif; color: #3b3b3b; position: relative; }
i, em { font-style: normal; }
svg { display: block; flex: none; }
ul { list-style: none; margin: 0; padding: 0; }
p { margin: 0; }
.app { display: flex; flex-direction: column; width: 1920px; height: 1080px; }

.caret { display: block; width: 0; height: 0; border: 3px solid transparent; border-top: 4px solid #666; border-bottom: 0; flex: none; }
.caret.off { border-top-color: #c8c8c8; }

/* title bar */
.titlebar { height: 32px; flex: none; display: grid; grid-template-columns: 1fr auto 1fr; align-items: center; background: #fff; }
.qa { display: flex; align-items: center; }
.qa-logo { width: 35px; padding-left: 3px; }
.qa-cell { width: 34px; height: 32px; display: flex; align-items: center; justify-content: center; gap: 2px; }
.qa-last { width: 16px; display: flex; justify-content: center; }
.title-text { font-size: 12.500px; color: #333; white-space: nowrap; }
.win-ctrl { display: flex; justify-content: flex-end; align-items: center; gap: 25px; padding-right: 14px; height: 22px; margin-top: -10px; }
.wc-min { margin-top: 5px; }

/* menu */
.menubar { height: 24px; flex: none; display: flex; align-items: center; font-size: 13px; border-bottom: 1px solid #e5e5e5; background: #fff; }
.menubar > span { padding: 0 13px; white-space: nowrap; margin-bottom: 2px; }
.menubar > .m-first { padding-left: 22px; }
.m-on b { font-weight: 400; color: #2b7de0; display: block; margin: 0 -3px; padding: 0 3px 2px; border-bottom: 3px solid #2b7de0; transform: translateY(3px); }
.menu-right { margin-left: auto; display: flex; align-items: center; padding-right: 7px; font-size: 12px; margin-top: 3px; }
.help-search { width: 320px; height: 16px; border: 1px solid #ddd; border-radius: 2px; display: flex; justify-content: space-between; align-items: center; padding: 0 8px 0 4px; color: #aaa; font-size: 11.700px; margin-right: 6px; }
.uname { margin-right: 17px; }
.mr-ic { margin-right: 8px; }
.mr-ic2 { margin-right: 9px; }
.qm { font-size: 14px; display: flex; align-items: center; gap: 2px; width: 21px; }
.qm .tiny { border-width: 2px; border-top-width: 3px; border-bottom: 0; }
.mr-ic3 { margin-right: 9px; margin-left: 3px; }

/* ribbon */
.ribbon { height: 100px; flex: none; display: flex; background: #fff; }
.rg { display: flex; flex-direction: column; }
.rg-opt { width: 56px; margin: 3px 0 4px; border-right: 1px solid #e3e3e3; align-items: center; }
.opt-main { display: flex; flex-direction: column; align-items: center; gap: 7px; padding-top: 1px; flex: 1; }
.rg-label { text-align: center; height: 16px; line-height: 16px; }
.rg-gen { width: 317px; margin: 3px 0 4px; border-right: 1px solid #e3e3e3; padding-left: 11px; }
.rg-grid { flex: 1; display: grid; grid-template-columns: 90px 102px auto; grid-auto-rows: 24px; align-content: start; }
.ri { display: flex; align-items: center; gap: 4px; white-space: nowrap; }
.ri .caret { margin-left: 1px; border-top-color: #888; }
.off { color: #bdbdbd; }
.rb-check { width: 13px; height: 14px; margin-left: -4px; border: 1px solid #8a8a8a; border-radius: 2px; background: #fff; }
.tiny-t { font: 5px "Liberation Sans", sans-serif; fill: #444; }
.rg-third { padding: 4px 0 0 10px; gap: 9px; }

/* selector bar */
.selbar { height: 32px; flex: none; display: flex; background: #f0f0f0; border-top: 1px solid #dcdcdc; }
.sel { width: 100px; padding: 0 6px 0 3px; border-right: 1px solid #dcdcdc; display: flex; align-items: center; justify-content: space-between; }

/* workspace */
.work { height: 820px; flex: none; display: flex; background: #f8f8f8; position: relative; }
.ph { height: 29px; flex: none; background: #edeef0; display: flex; align-items: center; position: relative; padding-top: 1px; }
.ph-x { position: absolute; right: 10px; top: 10px; }
.grip { display: block; width: 6px; height: 16px; margin-left: 7px; background-image: radial-gradient(circle, #888 1px, transparent 1.200px); background-size: 3px 4px; background-color: transparent; flex: none; }
.g2 { margin-left: 8px; }
.ph-t { margin-left: 13px; }
.ph-t2 { margin-left: 10px; }

.nav { width: 242px; flex: none; background: #fff; border-right: 1px solid #ddd; position: relative; overflow: hidden; height: 820px; }
.sec { height: 42px; width: 229px; background: #f6f7f8; display: flex; align-items: center; padding-left: 12px; gap: 14px; }
.sec-on { background: #edeef0; color: #3b7fe0; }
.sec-last { height: 35px; align-items: flex-start; padding-top: 2px; }
.sec-last span { padding-top: 9px; }
.sub { height: 28px; line-height: 28px; padding-left: 22px; }
.sub-on { color: #2b8cf0; }
.nav-scroll { position: absolute; left: 232px; top: 365px; width: 4px; height: 408px; background: #e6e6e6; border-radius: 2px; }

.mid { width: 295px; flex: none; margin-left: 5px; display: flex; flex-direction: column; gap: 6px; margin-right: 4px; }
.list-panel { height: 370px; background: #fff; border: 1px solid #ddd; border-top: 0; flex: none; }
.ph-tabs { align-items: stretch; padding-top: 0; }
.ph-tabs .grip { align-self: center; }
.tab-on { width: 69px; margin-left: 7px; background: #fff; color: #2b7de0; display: flex; align-items: center; justify-content: center; padding-top: 1px; }
.tab-off { margin-left: 10px; align-self: center; padding-top: 1px; }
.lp-tools { display: flex; gap: 9px; padding: 7px 0 0 9px; }
.lbtn { width: 32px; height: 26px; background: #f5f5f5; border-radius: 3px; display: flex; align-items: center; justify-content: center; }
.lb-new { width: 45px; justify-content: flex-start; padding-left: 7px; background: linear-gradient(90deg, #f5f5f5 32px, #fff 32px, #fff 33px, #f5f5f5 33px); gap: 11px; }
.lb-caret { border-top-color: #aaa; }
.lp-search { margin: 7px 0 0 7px; height: 26px; width: 260px; border-radius: 13px; background: #f6f6f6; color: #999; padding-left: 11px; line-height: 26px; }
.lp-list { padding: 10px 0 0 11px; }
.lp-list li { height: 21px; line-height: 21px; width: 84px; padding-left: 3px; margin-bottom: 3px; border-radius: 2px; white-space: nowrap; font-size: 13px; word-spacing: 2px; }
.lp-list .lp-on { background: #c9ddf6; }

.prop-panel { flex: 1; background: #fff; border: 1px solid #ddd; border-top: 0; border-bottom: 1px solid #ddd; }
.pt-head { height: 24px; margin-top: 1px; display: grid; grid-template-columns: 101px 152px 1fr; background: #efefef; border-bottom: 1px solid #ddd; text-align: center; line-height: 22px; }
.pt-head span, .pt-head b { border-right: 1px solid #d8d8d8; font-weight: 400; }
.pt-head b { font-weight: 700; }
.pt-sec { height: 24px; background: #ececec; display: flex; align-items: center; padding-left: 10px; gap: 6px; margin-right: 2px; }
.pt-gap { margin-top: 1px; }
.tri-d { width: 0; height: 0; border: 3px solid transparent; border-top: 4px solid #888; border-bottom: 0; margin-right: 0; }
.tri-r { width: 0; height: 0; border: 3px solid transparent; border-left: 4px solid #888; border-right: 0; margin-left: 1px; margin-right: 2px; }
.pr { height: 25px; display: grid; align-items: start; padding: 3px 0 0 15px; grid-template-columns: 86px 151px 1fr; }
.pr span:first-child { line-height: 21px; white-space: nowrap; }
.lk { color: #2b6fd6; }
.pv { height: 21px; line-height: 19px; border: 1px solid #ddd; padding-left: 2px; display: flex; justify-content: space-between; white-space: nowrap; }
.pv-on { border-color: #5b9bec; padding: 0 3px 0 4px; align-items: center; }
.more { display: block; width: 15px; height: 14px; line-height: 11px; border: 1px solid #7ab0f0; border-radius: 3px; text-align: center; color: #2b7de0; background: #eaf3fd; font: 700 10px/11px "Liberation Sans", sans-serif; }
.dot { display: block; width: 8px; height: 8px; border-radius: 50%; background: #ccc; border: 1px solid #bbb; margin: 6px 0 0 17px; }

.canvas { width: 1030px; flex: none; background: #000; height: 820px; overflow: hidden; }
.cad-t text { font: 16px "Liberation Sans", sans-serif; fill: #fff; }
.ax-y { font: 14px "Liberation Sans", sans-serif; fill: #0f0; }
.ax-x { font: 14px "Liberation Sans", sans-serif; fill: #f00; }

.vtools { width: 32px; flex: none; background: #fff; display: flex; flex-direction: column; align-items: center; padding-top: 11px; gap: 5px; margin-right: 5px; border-radius: 2px 2px 0 0; border-right: 1px solid #ddd; }
.vt-tri { width: 0; height: 0; border: 3px solid transparent; border-top: 4px solid #555; border-bottom: 0; }
.vt-g { margin-top: 6px; }
.vt-l { margin-top: 9px; }
.t3d { font: 700 7px "Liberation Sans", sans-serif; fill: #2b7de0; }

.disp { flex: 1; background: #fff; border-left: 1px solid #ddd; border-bottom: 1px solid #ddd; display: flex; flex-direction: column; height: 820px; }
.disp .ph { height: 31px; }
.g3 { margin-left: 7px; }
.d-tabs { display: flex; padding: 2px 0 0 3px; gap: 3px; height: 25px; border-bottom: 1px solid #ddd; flex: none; }
.dt-on, .dt-off { width: 61px; text-align: center; line-height: 22px; border-radius: 3px 3px 0 0; }
.dt-on { border: 1px solid #ddd; border-bottom: 0; color: #2b7de0; background: #fff; height: 23px; }
.dt-off { width: 60px; background: #e6e6e6; color: #666; }
.d-table { margin: 3px 3px 0 3px; height: 722px; border: 1px solid #ddd; border-right: 1px solid #ddd; position: relative; overflow: hidden; flex: none; padding-right: 14px; }
.dr { height: 21px; display: grid; grid-template-columns: 160px 63px 1fr; border-bottom: 1px solid #ddd; border-right: 1px solid #ddd; }
.dr > span { display: flex; align-items: center; justify-content: center; border-right: 1px solid #ddd; white-space: nowrap; }
.dr > span:last-child { border-right: 0; }
.dr-h { height: 20px; }
.dr .n0 { justify-content: flex-start; padding-left: 3px; gap: 5px; }
.dr .n1 { justify-content: flex-start; padding-left: 13px; gap: 5px; }
.dr .n2 { justify-content: flex-start; padding-left: 41px; }
.tbox { width: 12px; height: 14px; border: 1px solid #888; border-radius: 2px; text-align: center; line-height: 11px; font-size: 11px; background: #fff; color: #444; }
.cb { display: block; width: 13px; height: 14px; border: 1px solid #8a8a8a; border-radius: 2px; background: #fff; }
.cb-f { background: #8fc0f8; box-shadow: inset 0 0 0 1px #fff; border-color: #3b88e8; }
.cb-c { background: #2b7de0; border-color: #2b7de0; color: #fff; font: 700 11px/12px "DejaVu Sans", sans-serif; text-align: center; }
.cb-g { background: #ececec; border-color: #bbb; }
.d-scroll { position: absolute; right: 3px; top: 12px; width: 3px; height: 180px; background: #e6e6e6; }
.d-foot { flex: 1; display: flex; justify-content: flex-end; align-items: flex-start; padding: 7px 9px 0 0; }
.d-reset { width: 89px; height: 25px; padding: 0; background: #fff; border: 1px solid #d0d0d0; border-radius: 3px; font: inherit; color: inherit; }

/* status bar */
.status { height: 32px; flex: none; display: flex; align-items: center; background: #fcfcfc; padding-left: 2px; white-space: nowrap; }
.st1 { width: 90px; } .st2 { width: 139px; } .st3 { width: 111px; } .st4 { width: 110px; }
.sb { height: 24px; border: 1px solid #999; border-radius: 3px; display: flex; align-items: center; justify-content: center; gap: 5px; margin-right: 4px; background: #fff; }
.sb-s { width: 25px; }
.sb-l { width: 35px; }
.sb-on { background: #d6e6fa; border-color: #4f94ea; }
.st-arrow { margin: 0 4px 0 13px; }

/* taskbar */
.taskbar { flex: 1; display: flex; align-items: center; border-top: 1px solid #2a3a4a; position: relative;
  background: linear-gradient(110deg, transparent 68%, rgba(255,255,255,.4) 70.500%, transparent 72.500%), linear-gradient(90deg, #2f85c2 0, #4a9ed4 30%, #4aa0d6 42%, #378bc8 52%, #2070b6 62%, #1b5fa6 74%, #164a86 100%); }
.orb { margin-left: 8px; }
.tb-grip { display: block; width: 9px; height: 32px; margin: 0 10px 0 11px; background-image: radial-gradient(circle, #1a2c42 1px, transparent 1.200px); background-size: 3px 4px; flex: none; }
.tb-btn { width: 58px; height: 38px; margin-right: 4px; display: flex; align-items: center; justify-content: center; border: 1px solid rgba(255,255,255,.55); border-radius: 3px; background: linear-gradient(180deg, rgba(255,255,255,.45), rgba(255,255,255,.12)); align-self: flex-end; }
.t-q { font: 700 22px "Liberation Sans", sans-serif; fill: #ffe000; stroke: #222; stroke-width: .7px; }
.t-h { font: 700 12px "Liberation Sans", sans-serif; fill: #fff; }
.tray { margin-left: auto; display: flex; align-items: center; gap: 8px; height: 100%; }
.tr-grip { margin: 0 8px 0 0; }
.tr-kb { margin-right: -2px; }
.tr-up { margin: 0; }
.clock { display: flex; flex-direction: column; align-items: center; color: #fff; font-size: 12px; line-height: 17px; width: 62px; margin: 0 10px 0 7px; }
.flag-box { width: 16px; height: 16px; background: #fff; display: flex; align-items: center; justify-content: center; margin-right: 5px; }
.flag-box i { border: 4px solid transparent; border-left: 5px solid #000; border-right: 0; }
.show-desk { width: 13px; height: 38px; margin-right: 0; background: linear-gradient(180deg, rgba(255,255,255,.35), rgba(255,255,255,.1)); border: 1px solid rgba(255,255,255,.4); }

/* dialogs */
.dlg { position: absolute; background: #fff; border: 1px solid #b5b5b5; box-shadow: 5px 5px 16px rgba(0,0,0,.55), 0 0 8px rgba(0,0,0,.3); }
.dlg1 { left: 400px; top: 38px; width: 963px; height: 534px; z-index: 10; padding: 0 10px 0 11px; }
.dlg-h { height: 39px; display: flex; align-items: center; justify-content: space-between; font-size: 14px; padding-bottom: 2px; }
.dlg-h svg { margin-right: 2px; }
.d1-body { display: flex; height: 450px; border: 1px solid #c8c8c8; width: 938px; }
.nt { width: 533px; flex: none; font-size: 12px; }
.nt-r { height: 21px; display: grid; grid-template-columns: 22px 310px 201px; }
.nt-r > span { display: flex; align-items: center; border-bottom: 1px solid #d6d6d6; border-right: 1px solid #d6d6d6; white-space: nowrap; overflow: hidden; padding-left: 2px; background: #fffde8; }
.nt-r > span:first-child { background: #efefef; justify-content: center; padding: 0; font-size: 13px; }
.nt-r > span:last-child { background: #fff; padding-left: 3px; }
.nt-hd { height: 20px; }
.nt-hd > span { background: #efefef; justify-content: center; padding: 0; }
.nt-hd > span:nth-child(2) { background: #efefef; }
.nt-hd > .nt-hnode:last-child { background: #82b9f8; color: #fff; font-weight: 700; justify-content: center; }
.nt-r.nt-cur > .nt-n:first-child { background: #7eb8f7; color: #fff; font-weight: 700; }
.nt-cur > span:last-child { border: 2px solid #5e9fec; padding: 0 3px; justify-content: space-between; }
.nt-dis > span:nth-child(n+2) { color: #a8a8a8; }
.prev { flex: 1; min-width: 0; margin-left: 4px; padding-top: 50px; }
.prev-box { height: 398px; border: 1px solid #c8c8c8; border-bottom: 0; padding: 0 0 0 7px; position: relative; overflow: hidden; }
.prev-t { height: 20px; line-height: 22px; margin-left: -1px; }
.prev-note { margin-top: 7px; line-height: 18px; white-space: nowrap; overflow: hidden; }

.dlg2 { left: 968px; top: 409px; width: 806px; height: 592px; z-index: 20; padding: 0 12px 0 11px; }
.dlg-h2 { height: 40px; padding-bottom: 4px; }
.dlg-h2 svg { margin-right: 0; }
.pick { height: 433px; display: flex; border-top: 1px solid #bfbfbf; border-left: 1px solid #bfbfbf; }
.pick-list { width: 767px; display: flex; gap: 6px; align-items: flex-start; flex: none; }
.thumb-on { outline: 3px solid #2e7cd6; outline-offset: -3px; }
.vscroll { width: 13px; margin-left: 0; border: 1px solid #ddd; border-top: 0; display: flex; flex-direction: column; justify-content: space-between; }
.vs-up, .vs-dn { display: block; height: 15px; border: 1px solid #ddd; position: relative; background: #fafafa; margin: 0 -1px; }
.vs-up::after { content: ""; position: absolute; left: 2px; top: 4px; border: 4.500px solid transparent; border-bottom: 5px solid #8a8a8a; border-top: 0; }
.vs-dn::after { content: ""; position: absolute; left: 2px; top: 5px; border: 4.500px solid transparent; border-top: 5px solid #8a8a8a; border-bottom: 0; }
.rule { height: 74px; padding-top: 7px; border-bottom: 1px solid #c8c8c8; font-size: 12px; width: 782px; }
.dlg-foot { display: flex; justify-content: flex-end; gap: 6px; padding-top: 8px; }
.btn { width: 80px; height: 26px; padding: 0; border: 1px solid #d0d0d0; border-radius: 3px; background: #fff; color: #333; font: inherit; }
.btn-p { background: #2e84e6; border-color: #2e84e6; color: #fff; }
.resize { position: absolute; right: 3px; bottom: 2px; }

/* drawing text */
.dg-title { font-family: "Liberation Serif", "Noto Sans CJK SC", serif; font-weight: 300; fill: #fff; }
.dg-big { font-size: 26px; }
.dg-mid { font-size: 17px; }
.dg-r { font-size: 18px; }
.dg-ha { font-family: "Liberation Serif", serif; fill: #fff; }
.dg-ha-big { font-size: 28px; }
.dg-ha-mid { font-size: 19px; }
.dg-green { font-family: "Liberation Serif", serif; fill: #0c0; }
.dg-g-big { font-size: 28px; }
.dg-g-mid { font-size: 18px; }
.dg-cyan { font: 300 22px "Noto Sans CJK SC", sans-serif; fill: #0ff; }
```
